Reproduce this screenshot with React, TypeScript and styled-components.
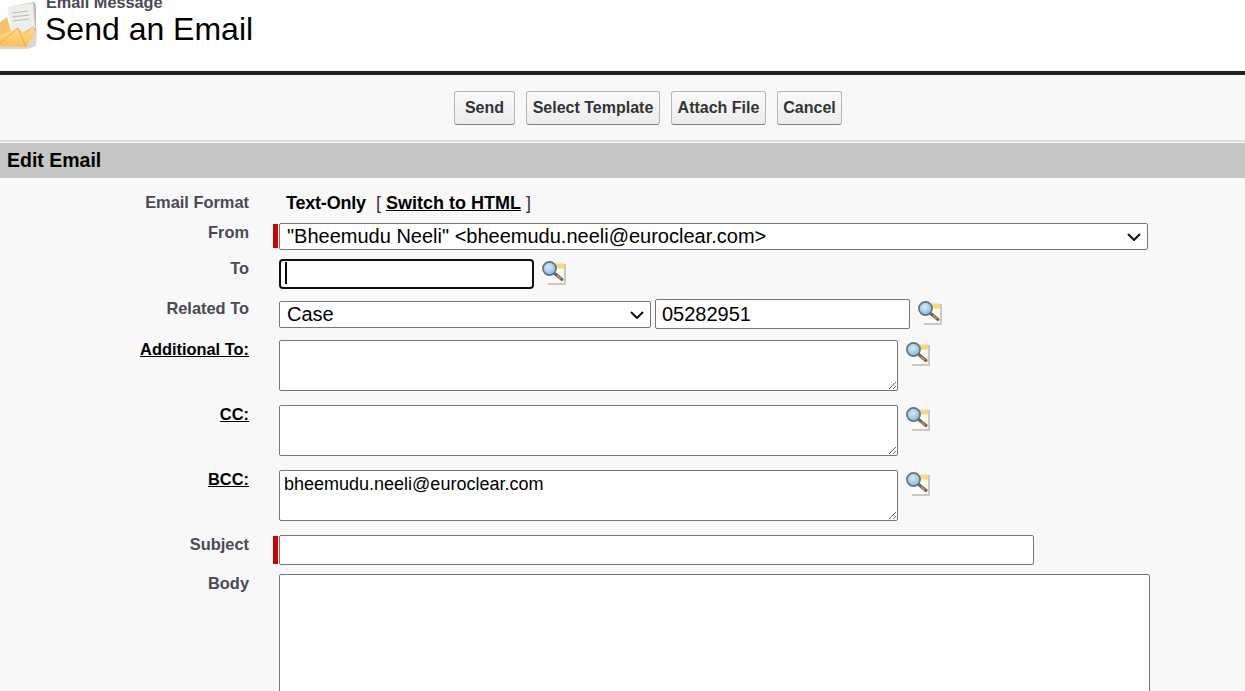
import React from "react";
import styled, { createGlobalStyle } from "styled-components";

const GlobalStyle = createGlobalStyle`
  html, body {
    margin: 0;
    padding: 0;
    height: 691px;
    overflow: hidden;
    background: #f8f8f8;
    font-family: "Liberation Sans", Arial, sans-serif;
  }
  * { box-sizing: border-box; }
`;

const Page = styled.div`
  height: 691px;
  overflow: hidden;
  background: #f8f8f8;
`;

const PageHeader = styled.header`
  height: 75px;
  background: #fff;
  border-bottom: 4px solid #222;
  display: flex;
  align-items: flex-start;
  overflow: hidden;
`;

const EnvelopeBox = styled.div`
  width: 45px;
  height: 50px;
  flex: none;
`;

const Titles = styled.div`
  display: flex;
  flex-direction: column;
  margin-top: -6px;
`;

const ObjectType = styled.div`
  padding-left: 1px;
  font-size: 16.25px;
  line-height: 16px;
  font-weight: bold;
  color: #4a4a56;
`;

const PageTitle = styled.h1`
  margin: 1px 0 0;
  font-size: 32px;
  line-height: 37px;
  font-weight: normal;
  color: #000;
`;

const ButtonRow = styled.div`
  height: 67px;
  padding: 16px 0 0 51px;
  display: flex;
  justify-content: center;
  gap: 11px;
  border-bottom: 2px solid #dfdfdf;
`;

const Btn = styled.button<{ $width: number }>`
  width: ${(p) => p.$width}px;
  height: 34px;
  padding: 0;
  border: 1px solid #b5b5b5;
  border-bottom-color: #7f7f7f;
  border-radius: 3px;
  background: linear-gradient(#f9f9f9, #ececec);
  color: #333;
  font-family: inherit;
  font-size: 16px;
  font-weight: bold;
`;

const SectionBar = styled.h2`
  margin: 1px 0 0;
  height: 35px;
  padding-left: 7px;
  background: #c6c6c6;
  color: #000;
  font-size: 19.5px;
  line-height: 35px;
  font-weight: bold;
`;

const Form = styled.div`
  display: flex;
  flex-direction: column;
  padding-top: 14px;
`;

const Row = styled.div<{ $height: number }>`
  display: flex;
  height: ${(p) => p.$height}px;
`;

const Label = styled.div<{ $top?: number }>`
  width: 249px;
  flex: none;
  padding-top: ${(p) => p.$top ?? 0}px;
  text-align: right;
  font-size: 16.4px;
  line-height: 18px;
  font-weight: bold;
  color: #4a4a56;
`;

const LinkLabel = styled.span`
  color: #000;
  text-decoration: underline;
`;

const Field = styled.div`
  position: relative;
  margin-left: 30px;
  display: flex;
  align-items: flex-start;
  flex: 1;
`;

const Required = styled.span<{ $height?: number }>`
  position: absolute;
  left: -6px;
  top: 1px;
  width: 5px;
  height: ${(p) => p.$height ?? 24}px;
  background: #c00;
`;

const FormatValue = styled.div`
  padding: 1px 0 0 7px;
  font-size: 18px;
  line-height: 20px;
  font-weight: bold;
  color: #000;
  white-space: pre;
`;

const TextOnly = styled.span`
  letter-spacing: -0.2px;
`;

const Bracket = styled.span`
  font-weight: normal;
  color: #333;
`;

const SwitchLink = styled.span`
  text-decoration: underline;
`;

const chevron =
  "data:image/svg+xml,%3Csvg xmlns='http://www.w3.org/2000/svg' width='14' height='8' viewBox='0 0 14 8'%3E%3Cpath d='M1 1 L7 7 L13 1' fill='none' stroke='%23111' stroke-width='2'/%3E%3C/svg%3E";

const Select = styled.select<{ $width: number; $top?: number }>`
  appearance: none;
  width: ${(p) => p.$width}px;
  height: 27px;
  margin-top: ${(p) => p.$top ?? 0}px;
  padding: 0 28px 2px 7px;
  border: 1px solid #767676;
  border-radius: 2px;
  background: #fff url("${chevron}") no-repeat right 6px center;
  color: #000;
  font-family: inherit;
  font-size: 20px;
`;

const TextInput = styled.input<{ $width: number; $left?: number }>`
  width: ${(p) => p.$width}px;
  height: 30px;
  margin-left: ${(p) => p.$left ?? 0}px;
  padding: 0 6px;
  border: 1px solid #767676;
  border-radius: 2px;
  background: #fff;
  color: #000;
  font-family: inherit;
  font-size: 20px;
  outline: none;
`;

const FocusedBox = styled.div`
  position: relative;
  width: 255px;
  height: 30px;
  border: 2px solid #101010;
  border-radius: 4px;
  background: #fff;
`;

const Caret = styled.span`
  position: absolute;
  left: 4px;
  top: 1px;
  width: 2px;
  height: 22px;
  background: #000;
`;

const TextArea = styled.textarea`
  display: block;
  width: 619px;
  height: 51px;
  padding: 3px 4px;
  border: 1px solid #767676;
  border-radius: 2px;
  background: #fff;
  color: #000;
  font-family: inherit;
  font-size: 18px;
  line-height: 21px;
  outline: none;
`;

const BodyArea = styled(TextArea)`
  width: 871px;
  height: 300px;
  resize: none;
`;

const LookupWrap = styled.span`
  display: block;
  flex: none;
  margin: 0 0 0 7px;
  width: 26px;
  height: 26px;
`;

const Lookup = () => (
  <LookupWrap>
    <svg width="26" height="26" viewBox="0 0 26 26">
      <defs>
        <radialGradient id="lens" cx="45%" cy="40%" r="65%">
          <stop offset="0%" stopColor="#d6ecf8" />
          <stop offset="100%" stopColor="#7db3d8" />
        </radialGradient>
      </defs>
      <rect x="7" y="5" width="18" height="21" fill="#c8c8c8" />
      <rect x="6" y="4" width="17" height="20" fill="#fbfbf4" />
      <rect x="14" y="4.5" width="9" height="5" fill="#fbd776" />
      <path d="M12.5 13.5 L21 20.5" stroke="#75624f" strokeWidth="3" strokeLinecap="round" />
      <path d="M16 16.5 L20 19.8" stroke="#c49a6b" strokeWidth="1.2" />
      <circle cx="8.5" cy="9.5" r="6.6" fill="url(#lens)" stroke="#5f7486" strokeWidth="1.6" />
    </svg>
  </LookupWrap>
);

const Envelope = () => (
  <svg width="45" height="50" viewBox="0 0 45 50">
    <defs>
      <linearGradient id="flap" x1="0" y1="0" x2="0" y2="1">
        <stop offset="0%" stopColor="#fde08d" />
        <stop offset="100%" stopColor="#f8bd5a" />
      </linearGradient>
    </defs>
    <path d="M-2 34 L35 27 L37 30 L36 46 L28 49 L-2 49 Z" fill="#bdb8b0" opacity="0.55" />
    <path d="M8 7 L34 2 L36 5 L36 30 L14 40 Z" fill="#bcbcbc" />
    <path d="M7 7 L33 3 L35 28 L13 38 Z" fill="#eeeeeb" />
    <path d="M12 13 L28 11 M12 17 L29 15 M13 21 L29 19" stroke="#b9b9b9" strokeWidth="1.2" />
    <path d="M-2 24 L7 17 L13 38 L34 26 L34 34 L26 46 L-2 46 Z" fill="#f7c369" />
    <path d="M-2 46 L-2 36 L18 28 L26 34 L34 27 L34 34 L26 47 Z" fill="url(#flap)" />
    <path d="M-2 45 L18 28 L26 47" fill="none" stroke="#eba155" strokeWidth="1" />
  </svg>
);

const App = () => {
  return (
    <Page>
      <GlobalStyle />
      <PageHeader>
        <EnvelopeBox>
          <Envelope />
        </EnvelopeBox>
        <Titles>
          <ObjectType>Email Message</ObjectType>
          <PageTitle>Send an Email</PageTitle>
        </Titles>
      </PageHeader>

      <ButtonRow>
        <Btn $width={61}>Send</Btn>
        <Btn $width={134}>Select Template</Btn>
        <Btn $width={95}>Attach File</Btn>
        <Btn $width={65}>Cancel</Btn>
      </ButtonRow>

      <SectionBar>Edit Email</SectionBar>

      <Form>
        <Row $height={31}>
          <Label $top={1}>Email Format</Label>
          <Field>
            <FormatValue>
              <TextOnly>Text-Only</TextOnly>  <Bracket>[ </Bracket>
              <SwitchLink>Switch to HTML</SwitchLink>
              <Bracket> ]</Bracket>
            </FormatValue>
          </Field>
        </Row>

        <Row $height={36}>
          <Label>From</Label>
          <Field>
            <Required />
            <Select $width={869} defaultValue="from">
              <option value="from">"Bheemudu Neeli" &lt;bheemudu.neeli@euroclear.com&gt;</option>
            </Select>
          </Field>
        </Row>

        <Row $height={40}>
          <Label>To</Label>
          <Field>
            <FocusedBox>
              <Caret />
            </FocusedBox>
            <Lookup />
          </Field>
        </Row>

        <Row $height={41}>
          <Label>Related To</Label>
          <Field>
            <Select $width={372} $top={2} defaultValue="case">
              <option value="case">Case</option>
            </Select>
            <TextInput $width={255} $left={4} defaultValue="05282951" readOnly />
            <Lookup />
          </Field>
        </Row>

        <Row $height={65}>
          <Label>
            <LinkLabel>Additional To:</LinkLabel>
          </Label>
          <Field>
            <TextArea readOnly />
            <Lookup />
          </Field>
        </Row>

        <Row $height={65}>
          <Label>
            <LinkLabel>CC:</LinkLabel>
          </Label>
          <Field>
            <TextArea readOnly />
            <Lookup />
          </Field>
        </Row>

        <Row $height={65}>
          <Label>
            <LinkLabel>BCC:</LinkLabel>
          </Label>
          <Field>
            <TextArea readOnly defaultValue="bheemudu.neeli@euroclear.com" />
            <Lookup />
          </Field>
        </Row>

        <Row $height={39}>
          <Label>Subject</Label>
          <Field>
            <Required $height={28} />
            <TextInput $width={755} readOnly />
          </Field>
        </Row>

        <Row $height={300}>
          <Label>Body</Label>
          <Field>
            <BodyArea readOnly />
          </Field>
        </Row>
      </Form>
    </Page>
  );
};

export default App;
